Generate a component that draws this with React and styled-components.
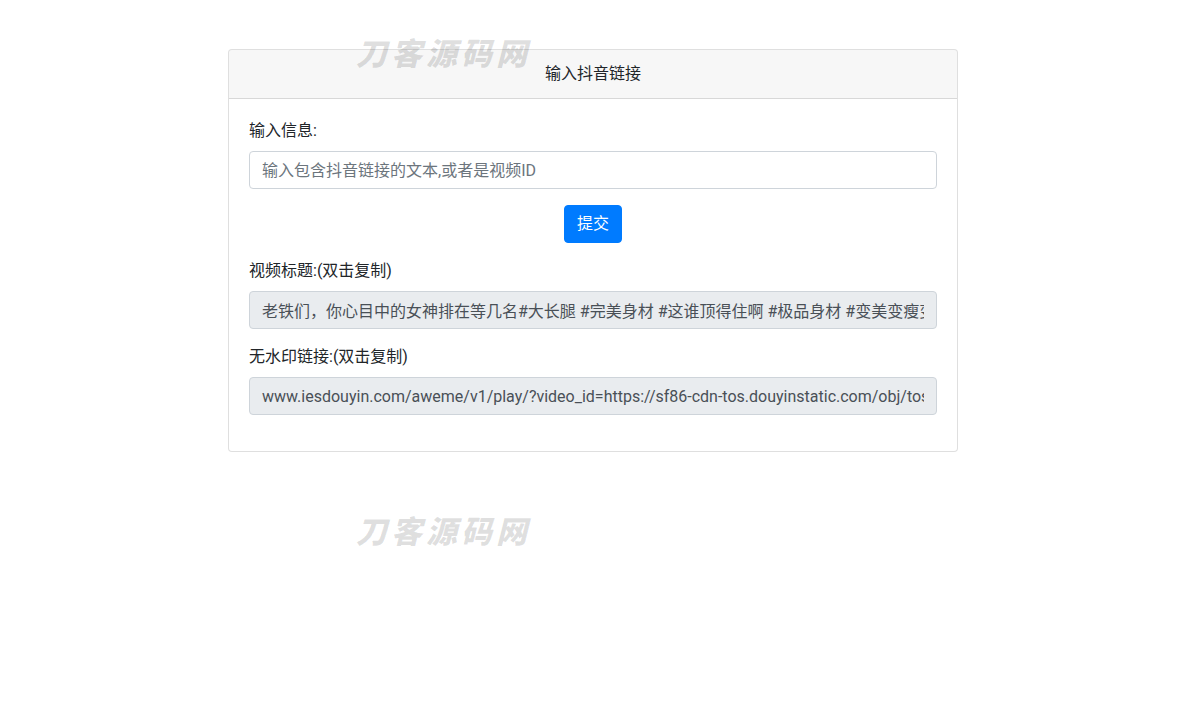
import React from "react";
import styled, { createGlobalStyle } from "styled-components";

const GlobalStyle = createGlobalStyle`
  * { box-sizing: border-box; }
  body {
    margin: 0;
    background: #fff;
    color: #212529;
    font-family: Roboto, "Noto Sans CJK SC", sans-serif;
    font-size: 16px;
    line-height: 1.5;
  }
`;

const Page = styled.div`
  position: relative;
  min-height: 715px;
  padding: 49px 225px 0 228px;
`;

const Watermark = styled.div`
  position: absolute;
  left: 356px;
  top: ${(p) => p.top}px;
  font-family: "Noto Sans CJK SC", sans-serif;
  font-size: 31px;
  font-weight: 900;
  font-style: italic;
  letter-spacing: 4px;
  line-height: 1;
  color: rgba(0, 0, 0, 0.13);
  pointer-events: none;
  user-select: none;
`;

const Card = styled.div`
  width: 730px;
  border: 1px solid rgba(0, 0, 0, 0.125);
  border-radius: 4px;
  background: #fff;
`;

const CardHeader = styled.div`
  background: rgba(0, 0, 0, 0.03);
  border-bottom: 1px solid rgba(0, 0, 0, 0.125);
  padding: 12px 20px;
  text-align: center;
  font-size: 16px;
  line-height: 24px;
  border-radius: 3px 3px 0 0;
`;

const CardBody = styled.div`
  padding: 20px;
`;

const Group = styled.div`
  margin-bottom: 16px;
`;

const Label = styled.label`
  display: block;
  margin-bottom: 8px;
  line-height: 24px;
`;

const Input = styled.input`
  display: block;
  width: 100%;
  height: 38px;
  padding: 6px 12px;
  font-family: inherit;
  font-size: 16px;
  line-height: 24px;
  color: #495057;
  background: ${(p) => (p.readOnly ? "#e9ecef" : "#fff")};
  border: 1px solid #ced4da;
  border-radius: 4px;
  outline: none;

  &::placeholder {
    color: #6c757d;
  }
`;

const ButtonRow = styled.div`
  display: flex;
  justify-content: center;
  margin-bottom: 16px;
`;

const Button = styled.button`
  height: 38px;
  padding: 6px 12px;
  font-family: inherit;
  font-size: 16px;
  line-height: 24px;
  color: #fff;
  background: #007bff;
  border: 1px solid #007bff;
  border-radius: 4px;
  cursor: pointer;
`;

export default function App() {
  return (
    <>
      <GlobalStyle />
      <Page>
        <Card>
          <CardHeader>输入抖音链接</CardHeader>
          <CardBody>
            <Group>
              <Label>输入信息:</Label>
              <Input placeholder="输入包含抖音链接的文本,或者是视频ID" />
            </Group>
            <ButtonRow>
              <Button>提交</Button>
            </ButtonRow>
            <Group>
              <Label>视频标题:(双击复制)</Label>
              <Input
                readOnly
                value="老铁们，你心目中的女神排在等几名#大长腿 #完美身材 #这谁顶得住啊 #极品身材 #变美变瘦变漂亮"
              />
            </Group>
            <Group>
              <Label>无水印链接:(双击复制)</Label>
              <Input
                readOnly
                value="www.iesdouyin.com/aweme/v1/play/?video_id=https://sf86-cdn-tos.douyinstatic.com/obj/tos-cn-ve-15/"
              />
            </Group>
          </CardBody>
        </Card>
        <Watermark top={36}>刀客源码网</Watermark>
        <Watermark top={514}>刀客源码网</Watermark>
      </Page>
    </>
  );
}
